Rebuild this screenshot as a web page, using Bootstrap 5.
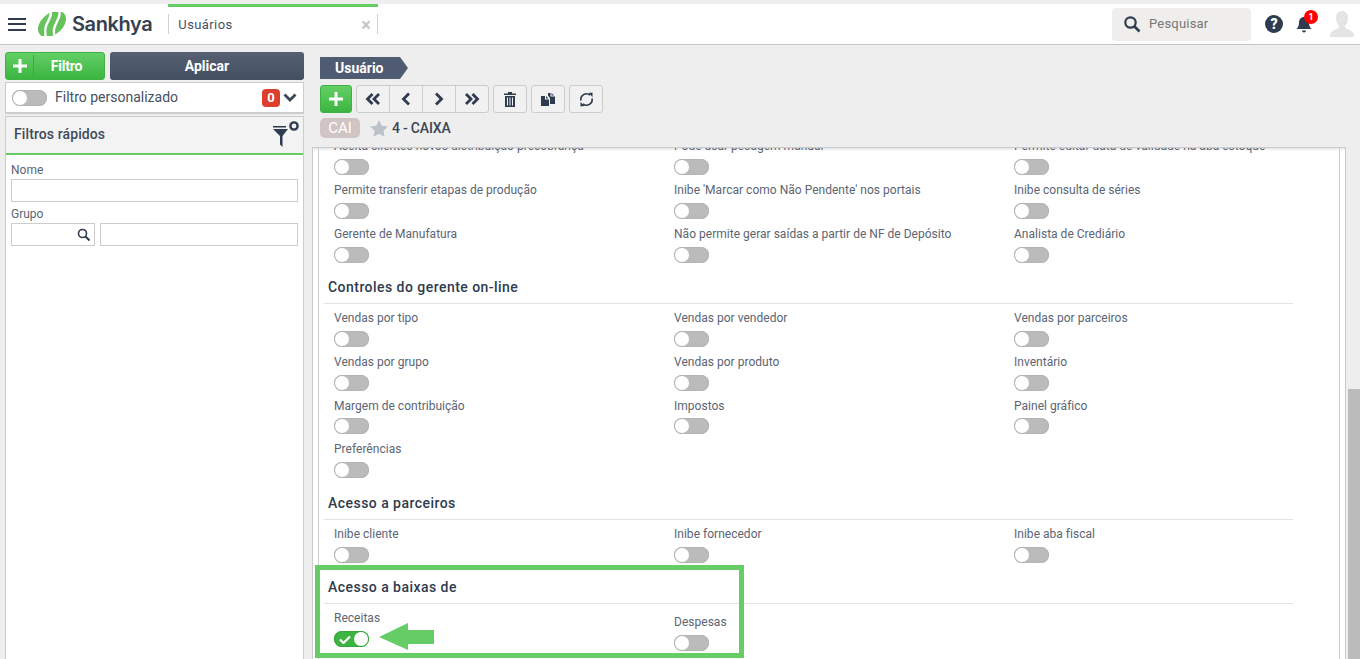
<!DOCTYPE html>
<html lang="pt-BR"><head><meta charset="utf-8"><title>Usuários</title>
<link href="https://cdn.jsdelivr.net/npm/bootstrap@5.3.0/dist/css/bootstrap.min.css" rel="stylesheet">
<style>
html,body{height:659px;overflow:hidden}
body{background:#eee;font-family:Roboto,"Liberation Sans",sans-serif;color:#3b4656;font-size:12px;padding-top:4px}
.topbar{height:41px;background:#fff;border-bottom:1px solid #c4c4c4}
.burger{margin-left:8px;width:18px;height:13px;display:flex;flex-direction:column;justify-content:space-between}
.burger i{display:block;height:2px;background:#2f3b4e}
.logomark{margin-left:12px}
.logoword{font-family:Inter,sans-serif;font-weight:600;font-size:20px;color:#36404f;letter-spacing:-.4px;margin-left:6px;margin-top:-1px}
.tabx{margin-left:16px;width:210px;height:40px;position:relative;border-top:3px solid #66cc66;align-self:flex-start;display:flex;align-items:center;justify-content:space-between;padding:0 7px 2px 10px;font-size:13px;color:#465162;letter-spacing:.4px}
.tabx::before{content:"";position:absolute;left:0;top:7px;height:20px;border-left:1px solid #cfd3d9}
.tabx::after{content:"";position:absolute;right:0;top:7px;height:20px;border-left:1px solid #cfd3d9}
.closex{color:#c6c6c6;font-size:18px;font-weight:700;line-height:1}
.searchbox{width:139px;height:33px;background:#efeeed;border-radius:4px;margin-right:14px;padding-left:11px;color:#777;font-size:13px;letter-spacing:.2px}
.hicons{width:18px;height:18px}
.belly{position:relative;margin-left:13px;width:16px;height:18px}
.redbadge{position:absolute;left:8px;top:-5px;width:14px;height:14px;background:#f00;border-radius:50%;color:#fff;font-size:9px;font-weight:700;line-height:14px;text-align:center}
.avatarx{margin-left:17px;margin-right:5px}
.main{height:614px}
.leftside{width:299px;margin-left:5px;padding-top:7px;flex:none}
.gbtn{background:linear-gradient(#63cf66,#3cb540);border:1px solid #3eb243;border-radius:3px;color:#fff;font-weight:700}
.filtrobtn{width:100px;height:28px;font-size:14px;letter-spacing:-.15px}
.filtrobtn .plusc{width:28px;border-right:1px solid #3ea943;height:22px;font-size:0}
.filtroword{padding-right:5px}
.aplicarbtn{width:194px;height:28px;margin-left:5px;background:linear-gradient(#556073,#434e60);border-radius:3px;color:#fff;font-weight:700;font-size:14px}
.fpbox{height:32px;margin-top:2px;background:#fff;border:1px solid #ccc;border-bottom:2px solid #ccc;padding:0 6px;font-size:14px;color:#465162}
.sw{display:block;width:35px;height:16px;border-radius:8px;background:#bbb;position:relative;box-shadow:inset 0 0 0 1px #b4b4b4}
.sw::after{content:"";position:absolute;left:1px;top:1px;width:14px;height:14px;border-radius:50%;background:#fff}
.sw.onsw{background:#3cb540;box-shadow:inset 0 0 0 1px #35a83a}
.sw.onsw::after{left:20px}
.sw.onsw svg{position:absolute;left:5px;top:4px}
.cnt{background:#dc3f2e;color:#fff;border-radius:4px;width:18px;height:18px;text-align:center;line-height:18px;font-weight:700;font-size:13px}
.chev{margin-left:3px}
.qfcard{margin-top:2px;height:545px;background:#fff;border:1px solid #ccc;border-bottom:0}
.qfhead{height:38px;background:#f3f3f3;border-bottom:2px solid #66cc66;padding:0 3px 2px 8px;font-size:14px;font-weight:500;color:#3f4a5a;letter-spacing:.1px}
.qfbody{padding:8px 5px 0}
.flabel{font-size:12px;color:#5b6573;line-height:14px;display:block}
.finput{height:23px;border:1px solid #ccc;background:#fff;display:block;margin-top:2px}
.grplabel{margin-top:5px}
.grpfind{width:84px}
.grptext{margin-left:1px}
.rightside{flex:1;min-width:0;position:relative;padding-left:16px}
.arrowchip{width:88px;height:22px;margin-top:12px;background:#4f5b70;color:#fff;font-weight:700;font-size:14px;line-height:22px;padding-left:15px;clip-path:polygon(0 0,80px 0,88px 11px,80px 22px,0 22px)}
.tools{margin-top:6px;height:28px;gap:4px}
.tbtn{width:34px;height:28px;background:#f1f1f1;border:1px solid #ccc;border-radius:3px;display:flex;align-items:center;justify-content:center}
.navgrp{display:flex;width:133px;height:28px;background:#f1f1f1;border:1px solid #ccc;border-radius:3px}
.navgrp span{flex:1;display:flex;align-items:center;justify-content:center;border-left:1px solid #ccc}
.navgrp span:first-child{border-left:0}
.addbtn{width:32px;height:28px}
.recline{margin-top:5px;height:20px}
.caitag{width:40px;height:20px;background:#d0c4c4;border-radius:5px;color:#fff;text-align:center;line-height:20px;font-size:15px}
.starx{margin-left:10px}
.recname{font-size:14px;font-weight:500;color:#3b4656;margin-left:4px;letter-spacing:-.2px}
.panelx{position:absolute;left:8px;top:102px;width:1034px;height:512px;background:#fff;border:1px solid #ccc;border-bottom:0;overflow:hidden;box-shadow:inset 0 3px 3px -2px #ddd}
.innerp{position:absolute;inset:0 5px 0 5px;border-right:1px solid #ccc;border-left:1px solid #ccc;padding:0 0 0 5px}
.flowc{margin-top:-10px;width:969px}
.sechead{height:34px;border-bottom:1px solid #e2e2e2;font-size:14px;font-weight:500;color:#2f3b4e;padding:8px 0 0 4px;line-height:18px;letter-spacing:.46px}
.optgrid{display:grid;grid-template-columns:340px 340px 289px;padding-left:10px}
.sechead + .optgrid{margin-top:6px}
.optcell{height:44px;font-size:12px;line-height:16px;color:#5b6573;letter-spacing:.02px}
.optcell .sw{margin-top:4.8px}
.optcell.shift{padding-top:4px}
.gridfour .optcell{height:43.8px}
.gridfour{margin-bottom:.8px}
.scrolly{position:absolute;right:0;top:344px;width:12px;height:270px;background:#bbb}
.hilite{position:absolute;left:315px;top:565px;width:429px;height:93px;border:5px solid #66cc66;pointer-events:none}
.greenarrow{position:absolute;left:379px;top:623px}
</style></head>
<body>
<header class="topbar d-flex align-items-center">
  <div class="burger"><i></i><i></i><i></i></div>
  <svg class="logomark" width="28" height="24" viewBox="0 0 28 24"><ellipse cx="14" cy="12" rx="16" ry="10.500" transform="rotate(-40 14 12)" fill="#66c35c"/><path d="M12 -1C16 6 4 11 8 25M21 -1C25 6 12 13 17 25" fill="none" stroke="#fff" stroke-width="2.400"/></svg>
  <span class="logoword">Sankhya</span>
  <div class="tabx"><span>Usuários</span><span class="closex">×</span></div>
  <div class="ms-auto d-flex align-items-center">
    <div class="searchbox d-flex align-items-center gap-2"><svg width="18" height="18" viewBox="0 0 18 18"><circle cx="7.500" cy="7.500" r="5.200" fill="none" stroke="#2f3b4e" stroke-width="2.200"/><path d="M11.500 11.500 16.500 16.500" stroke="#2f3b4e" stroke-width="2.600"/></svg><span>Pesquisar</span></div>
    <svg class="hicons" viewBox="0 0 18 18"><circle cx="9" cy="9" r="9" fill="#2f3b4e"/><text x="9" y="14" text-anchor="middle" font-family="Roboto,sans-serif" font-weight="900" font-size="14" fill="#fff">?</text></svg>
    <div class="belly"><svg width="16" height="18" viewBox="0 0 16 18"><path fill="#2f3b4e" d="M8 1c3.200 0 5 2.500 5 5.500 0 3.500 1 5 2.500 6.500H.5C2 11.500 3 10 3 6.500 3 3.500 4.800 1 8 1zM6 14.500h4a2 2 0 0 1-4 0z"/></svg><span class="redbadge">1</span></div>
    <svg class="avatarx" width="26" height="28" viewBox="0 0 26 28"><path fill="#e4e4e4" d="M13 1c4 0 6 3 6 7 0 3-1 6-3 8v2c3 1 9 3 9 8v1H1v-1c0-5 6-7 9-8v-2c-2-2-3-5-3-8 0-4 2-7 6-7z"/></svg>
  </div>
</header>
<div class="main d-flex">
  <aside class="leftside">
    <div class="d-flex">
      <div class="gbtn filtrobtn d-flex align-items-center"><div class="plusc d-flex align-items-center justify-content-center"><svg width="14" height="14" viewBox="0 0 14 14"><path d="M5.500 0h3v5.500H14v3H8.500V14h-3V8.500H0v-3h5.500z" fill="#fff"/></svg></div><div class="flex-grow-1 text-center filtroword">Filtro</div></div>
      <div class="aplicarbtn d-flex align-items-center justify-content-center">Aplicar</div>
    </div>
    <div class="fpbox d-flex align-items-center"><span class="sw"></span><span class="ms-2">Filtro personalizado</span><span class="cnt ms-auto">0</span><svg class="chev" width="14" height="9" viewBox="0 0 14 9"><path d="M1.500 1.500 7 7l5.500-5.500" fill="none" stroke="#3b4656" stroke-width="2.800"/></svg></div>
    <section class="qfcard">
      <div class="qfhead d-flex align-items-center justify-content-between"><span>Filtros rápidos</span>
        <svg width="27" height="28" viewBox="0 0 27 28"><path fill="#2f3b4e" d="M0 6h13v1.500H0zM0 9h15l-5.500 7v11L7 24.500V16z"/><circle cx="21" cy="6" r="3.600" fill="none" stroke="#2f3b4e" stroke-width="2.400"/></svg></div>
      <div class="qfbody">
        <label class="flabel">Nome</label><span class="finput"></span>
        <label class="flabel grplabel">Grupo</label>
        <div class="d-flex gap-1"><span class="finput grpfind d-flex align-items-center justify-content-end pe-1"><svg width="13" height="13" viewBox="0 0 13 13"><circle cx="5.500" cy="5.500" r="4" fill="none" stroke="#2f3b4e" stroke-width="1.600"/><path d="m8.500 8.500 4 4" stroke="#2f3b4e" stroke-width="2"/></svg></span><span class="finput grptext flex-grow-1"></span></div>
      </div>
    </section>
  </aside>
  <main class="rightside">
    <div class="arrowchip">Usuário</div>
    <div class="tools d-flex">
      <div class="gbtn addbtn d-flex align-items-center justify-content-center"><svg width="14" height="14" viewBox="0 0 14 14"><path d="M5.500 0h3v5.500H14v3H8.500V14h-3V8.500H0v-3h5.500z" fill="#fff"/></svg></div>
      <div class="navgrp">
        <span><svg width="16" height="12" viewBox="0 0 16 12"><path d="M7.500 1 2.500 6l5 5M14 1 9 6l5 5" fill="none" stroke="#2f3b4e" stroke-width="2.800"/></svg></span>
        <span><svg width="10" height="14" viewBox="0 0 10 14"><path d="M8 1.500 2.500 7 8 12.500" fill="none" stroke="#2f3b4e" stroke-width="2.800"/></svg></span>
        <span><svg width="10" height="14" viewBox="0 0 10 14"><path d="M2 1.500 7.500 7 2 12.500" fill="none" stroke="#2f3b4e" stroke-width="2.800"/></svg></span>
        <span><svg width="16" height="12" viewBox="0 0 16 12"><path d="M2 1l5 5-5 5M8.500 1l5 5-5 5" fill="none" stroke="#2f3b4e" stroke-width="2.800"/></svg></span>
      </div>
      <div class="tbtn"><svg width="12" height="15" viewBox="0 0 12 15"><path fill="#2f3b4e" fill-rule="evenodd" d="M4 0h4v1.500h4V3H0V1.500h4zM1 4h10v11H1zM3 5.500v8h1v-8zM5.500 5.500v8h1v-8zM8 5.500v8h1v-8z"/></svg></div>
      <div class="tbtn"><svg width="14" height="13" viewBox="0 0 14 13"><path fill="#2f3b4e" d="M0 3h4v3.500h4V13H0zM5 3v2.500h2.500zM7 0h2.500v3.500H14V11H9V5L7 2.800zM10.500 0v2.500H13z"/></svg></div>
      <div class="tbtn"><svg width="15" height="15" viewBox="0 0 15 15"><path d="M2 8.500A5.500 5.500 0 0 1 11 3.200M13 6.500A5.500 5.500 0 0 1 4 11.800" fill="none" stroke="#2f3b4e" stroke-width="1.600"/><path fill="#2f3b4e" d="M9.500 1 13.500 .5V5zM5.500 14 1.500 14.500V10z"/></svg></div>
    </div>
    <div class="recline d-flex align-items-center"><span class="caitag">CAI</span><svg class="starx" width="18" height="17" viewBox="0 0 19 18"><path fill="#bcc1ca" d="m9.500 0 2.900 6 6.600.8-4.800 4.500 1.200 6.500-5.900-3.200-5.900 3.200 1.200-6.500L0 6.800 6.600 6z"/></svg><span class="recname">4 - CAIXA</span></div>
    <div class="panelx"><div class="innerp"><div class="flowc">
      <div class="optgrid">
        <div class="optcell">Aceita clientes novos distribuição precobrança<span class="sw"></span></div>
        <div class="optcell">Pode usar pesagem manual<span class="sw"></span></div>
        <div class="optcell">Permite editar data de validade na aba estoque<span class="sw"></span></div>
        <div class="optcell">Permite transferir etapas de produção<span class="sw"></span></div>
        <div class="optcell">Inibe 'Marcar como Não Pendente' nos portais<span class="sw"></span></div>
        <div class="optcell">Inibe consulta de séries<span class="sw"></span></div>
        <div class="optcell">Gerente de Manufatura<span class="sw"></span></div>
        <div class="optcell">Não permite gerar saídas a partir de NF de Depósito<span class="sw"></span></div>
        <div class="optcell">Analista de Crediário<span class="sw"></span></div>
      </div>
      <div class="sechead">Controles do gerente on-line</div>
      <div class="optgrid gridfour">
        <div class="optcell">Vendas por tipo<span class="sw"></span></div>
        <div class="optcell">Vendas por vendedor<span class="sw"></span></div>
        <div class="optcell">Vendas por parceiros<span class="sw"></span></div>
        <div class="optcell">Vendas por grupo<span class="sw"></span></div>
        <div class="optcell">Vendas por produto<span class="sw"></span></div>
        <div class="optcell">Inventário<span class="sw"></span></div>
        <div class="optcell">Margem de contribuição<span class="sw"></span></div>
        <div class="optcell">Impostos<span class="sw"></span></div>
        <div class="optcell">Painel gráfico<span class="sw"></span></div>
        <div class="optcell">Preferências<span class="sw"></span></div>
      </div>
      <div class="sechead">Acesso a parceiros</div>
      <div class="optgrid">
        <div class="optcell">Inibe cliente<span class="sw"></span></div>
        <div class="optcell">Inibe fornecedor<span class="sw"></span></div>
        <div class="optcell">Inibe aba fiscal<span class="sw"></span></div>
      </div>
      <div class="sechead">Acesso a baixas de</div>
      <div class="optgrid">
        <div class="optcell">Receitas<span class="sw onsw"><svg width="12" height="9" viewBox="0 0 12 9"><path d="M1 4.500 4.500 8 11 1.500" fill="none" stroke="#fff" stroke-width="2.200"/></svg></span></div>
        <div class="optcell shift">Despesas<span class="sw"></span></div>
      </div>
    </div></div></div>
    <div class="scrolly"></div>
  </main>
</div>
<div class="hilite"></div>
<svg class="greenarrow" width="55" height="27" viewBox="0 0 55 27"><path fill="#66cc66" d="M0 14 29 0v7h26v14H29v6z"/></svg>
</body></html>
